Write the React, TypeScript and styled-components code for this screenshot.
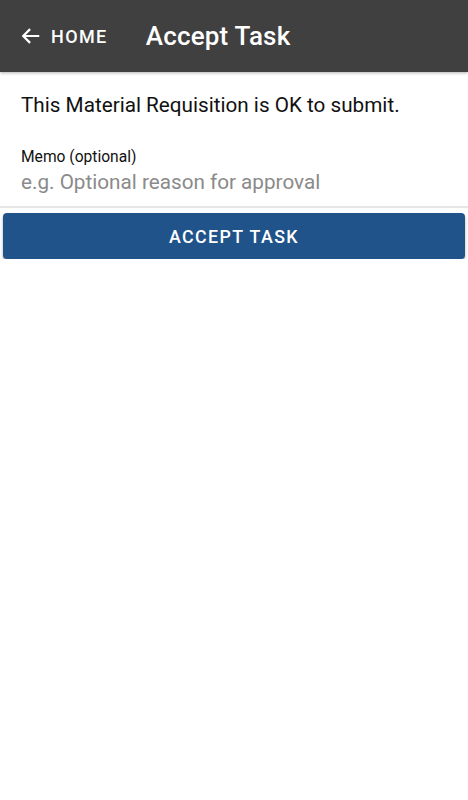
import React from 'react'
import styled, { createGlobalStyle } from 'styled-components'

const GlobalStyle = createGlobalStyle`
  html, body {
    margin: 0;
    padding: 0;
    background: #ffffff;
    font-family: Roboto, 'Noto Sans', sans-serif;
  }
`

/* Header */
const Header = styled.header`
  display: flex;
  align-items: center;
  height: 72px;
  background: #404040;
  color: #ffffff;
  box-shadow: 0 1px 3px rgba(0, 0, 0, 0.3);
`
const BackButton = styled.button`
  display: flex;
  align-items: center;
  gap: 9px;
  margin-left: 20px;
  padding: 0;
  border: none;
  background: none;
  color: #ffffff;
  font-family: Roboto, sans-serif;
  font-weight: 500;
  font-size: 18px;
  letter-spacing: 1.4px;
`
const Title = styled.h1`
  margin: 0 0 0 38px;
  font-family: Roboto, sans-serif;
  font-weight: 500;
  font-size: 26px;
  letter-spacing: 0.2px;
`

/* Content */
const Message = styled.p`
  margin: 0;
  padding: 21px 21px 0;
  font-size: 20.7px;
  line-height: 24px;
  color: #111111;
`
const Field = styled.label`
  display: flex;
  flex-direction: column;
  padding: 32px 21px 0;
  border-bottom: 2px solid #e6e6e6;
`
const FieldLabel = styled.span`
  font-size: 15.6px;
  line-height: 16px;
  color: #111111;
`
const MemoInput = styled.input`
  border: none;
  outline: none;
  padding: 5px 0 12px;
  font-family: Roboto, sans-serif;
  font-size: 20.7px;
  color: #222222;
  &::placeholder {
    color: #8a8a8a;
  }
`
const AcceptButton = styled.button`
  display: block;
  width: calc(100% - 6px);
  height: 46px;
  margin: 5px 3px 0;
  border: none;
  border-radius: 4px;
  background: #1f538a;
  color: #ffffff;
  font-family: Roboto, sans-serif;
  font-weight: 500;
  font-size: 17.8px;
  letter-spacing: 1.4px;
  box-shadow: 0 2px 3px rgba(0, 0, 0, 0.35);
`

const BackArrow = () => (
  <svg width="22" height="22" viewBox="0 0 24 24" fill="none" stroke="#fff" strokeWidth="2.4">
    <path d="M21 12H4M11 4.5L3.5 12l7.5 7.5" />
  </svg>
)

const App = () => {
  return (
    <>
      <GlobalStyle />
      <Header>
        <BackButton>
          <BackArrow />
          HOME
        </BackButton>
        <Title>Accept Task</Title>
      </Header>
      <Message>This Material Requisition is OK to submit.</Message>
      <Field>
        <FieldLabel>Memo (optional)</FieldLabel>
        <MemoInput placeholder="e.g. Optional reason for approval" />
      </Field>
      <AcceptButton>ACCEPT TASK</AcceptButton>
    </>
  )
}

export default App
